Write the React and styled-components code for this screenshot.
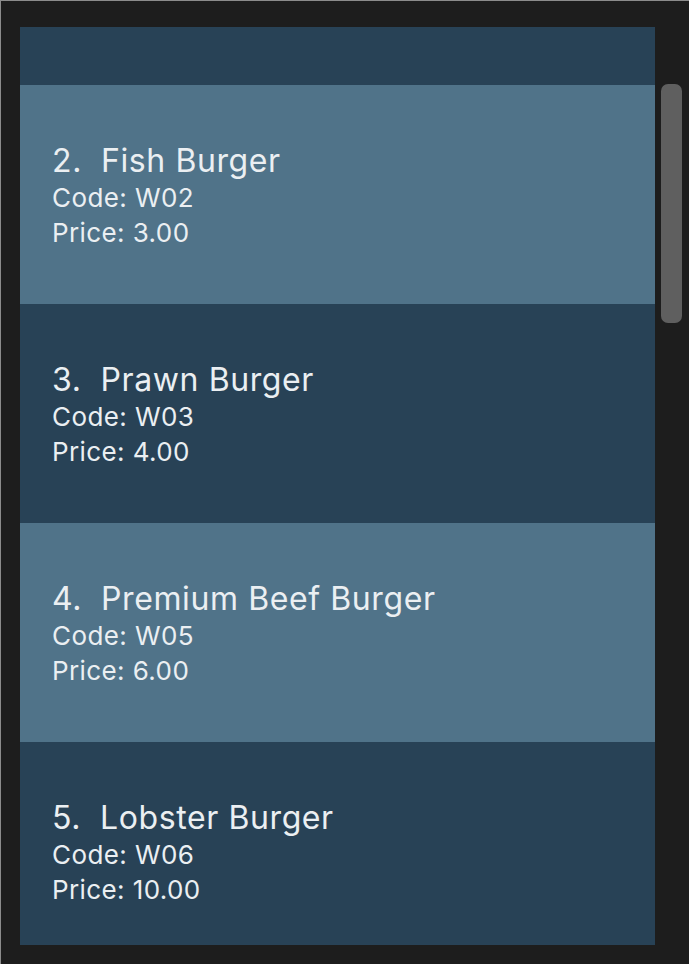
import React, { useLayoutEffect, useRef } from 'react'
import styled, { createGlobalStyle } from 'styled-components'

const items = [
  { id: 1, name: 'Beef Burger', code: 'W01', price: '2.00' },
  { id: 2, name: 'Fish Burger', code: 'W02', price: '3.00' },
  { id: 3, name: 'Prawn Burger', code: 'W03', price: '4.00' },
  { id: 4, name: 'Premium Beef Burger', code: 'W05', price: '6.00' },
  { id: 5, name: 'Lobster Burger', code: 'W06', price: '10.00' },
  { id: 6, name: 'Wagyu Burger', code: 'W07', price: '12.00' },
]

const GlobalStyle = createGlobalStyle`
  html, body {
    margin: 0;
    padding: 0;
    background: #1d1d1d;
  }
  body {
    font-family: 'Inter', 'Noto Sans', sans-serif;
  }
`

const Frame = styled.div`
  box-sizing: border-box;
  width: 689px;
  height: 964px;
  background: #1d1d1d;
  border-top: 1px solid #8c8c8c;
  border-left: 1px solid #8c8c8c;
  padding: 26px 0 0 19px;
  display: flex;
  align-items: flex-start;
  gap: 6px;
`

const ListView = styled.div`
  width: 635px;
  height: 918px;
  overflow: hidden;
  background: #284256;
`

const Cell = styled.div`
  box-sizing: border-box;
  height: 219px;
  padding: 4px 0 0 32px;
  display: flex;
  flex-direction: column;
  justify-content: center;
  background: ${p => (p.$odd ? '#284256' : '#507389')};
  color: #ebeff2;
`

const Title = styled.div`
  font-size: 32px;
  line-height: 35px;
  letter-spacing: 0.6px;
  margin-bottom: 2px;
`

const Index = styled.span`
  margin-right: 19px;
`

const Detail = styled.div`
  font-size: 26px;
  line-height: 35px;
  letter-spacing: 0.4px;
`

const ScrollTrack = styled.div`
  width: 21px;
  padding-top: 57px;
`

const Thumb = styled.div`
  width: 21px;
  height: 239px;
  border-radius: 7px;
  background: #5f5f5f;
`

const App = () => {
  const listRef = useRef(null)

  useLayoutEffect(() => {
    if (listRef.current) listRef.current.scrollTop = 161
  }, [])

  return (
    <>
      <GlobalStyle />
      <Frame>
        <ListView ref={listRef}>
          {items.map((item, i) => (
            <Cell key={item.id} $odd={i % 2 === 0}>
              <Title>
                <Index>{item.id}.</Index>
                {item.name}
              </Title>
              <Detail>Code: {item.code}</Detail>
              <Detail>Price: {item.price}</Detail>
            </Cell>
          ))}
        </ListView>
        <ScrollTrack>
          <Thumb />
        </ScrollTrack>
      </Frame>
    </>
  )
}

export default App
